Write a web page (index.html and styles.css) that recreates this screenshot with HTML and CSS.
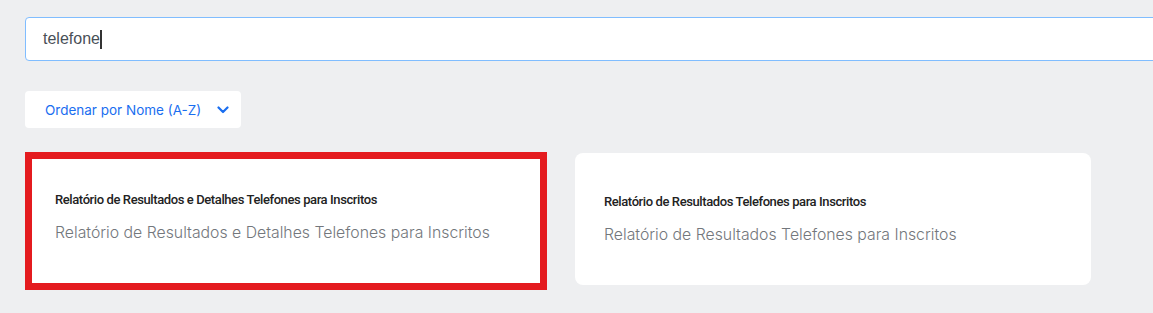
FILE: index.html
```html
<!DOCTYPE html>
<html lang="pt-BR">
<head>
    <meta charset="UTF-8">
    <meta name="viewport" content="width=device-width, initial-scale=1.0">
    <title>Relatórios</title>
    <link rel="stylesheet" href="styles.css">
</head>
<body>
    <div class="page">
        <div class="search">
            <span class="search-text">telefone</span><span class="caret"></span>
        </div>

        <div class="sort">
            <span>Ordenar por Nome (A-Z)</span>
            <svg class="chevron" width="12" height="8" viewBox="0 0 12 8">
                <path d="M1.5 1.5 L6 6 L10.5 1.5" fill="none" stroke="#1a6ef0" stroke-width="2.2" stroke-linecap="round" stroke-linejoin="round"/>
            </svg>
        </div>

        <div class="cards">
            <div class="card card-selected">
                <h4>Relatório de Resultados e Detalhes Telefones para Inscritos</h4>
                <p>Relatório de Resultados e Detalhes Telefones para Inscritos</p>
            </div>
            <div class="card">
                <h4>Relatório de Resultados Telefones para Inscritos</h4>
                <p>Relatório de Resultados Telefones para Inscritos</p>
            </div>
        </div>
    </div>
</body>
</html>
```

FILE: styles.css
```css
body, html {
    margin: 0;
    padding: 0;
    background-color: #eeeff1;
    font-family: 'Inter', 'Noto Sans', sans-serif;
    overflow: hidden;
}
.page {
    padding: 17px 0 0 25px;
}
.search {
    width: 1160px;
    height: 44px;
    box-sizing: border-box;
    display: flex;
    align-items: center;
    padding-left: 17px;
    background-color: white;
    border: 1px solid #80bdff;
    border-radius: 4px;
}
.search-text {
    font-family: 'Liberation Sans', Arial, sans-serif;
    font-size: 16px;
    color: #495057;
}
.caret {
    display: inline-block;
    width: 2px;
    height: 19px;
    background-color: #333;
}
.sort {
    margin-top: 30px;
    width: 216px;
    height: 37px;
    box-sizing: border-box;
    display: flex;
    align-items: center;
    justify-content: space-between;
    padding: 0 12px 0 20px;
    background-color: white;
    border-radius: 4px;
    font-size: 13.5px;
    color: #1a6ef0;
}
.chevron {
    display: block;
}
.cards {
    display: flex;
    align-items: flex-start;
    margin-top: 24px;
}
.card {
    width: 516px;
    height: 132px;
    box-sizing: border-box;
    padding: 40px 29px 0;
    margin-top: 1px;
    margin-left: 28px;
    background-color: white;
    border-radius: 8px;
}
.card-selected {
    width: 522px;
    height: 138px;
    margin: 0;
    padding: 32px 23px 0;
    border: 7px solid #e41b1f;
    border-radius: 0;
}
.card h4 {
    margin: 0;
    font-family: 'Roboto', sans-serif;
    font-size: 13px;
    font-weight: 500;
    letter-spacing: -0.4px;
    color: #222;
    line-height: 18px;
}
.card p {
    margin: 14px 0 0;
    font-size: 15.8px;
    font-weight: 300;
    color: #73777c;
    line-height: 20px;
}
```
